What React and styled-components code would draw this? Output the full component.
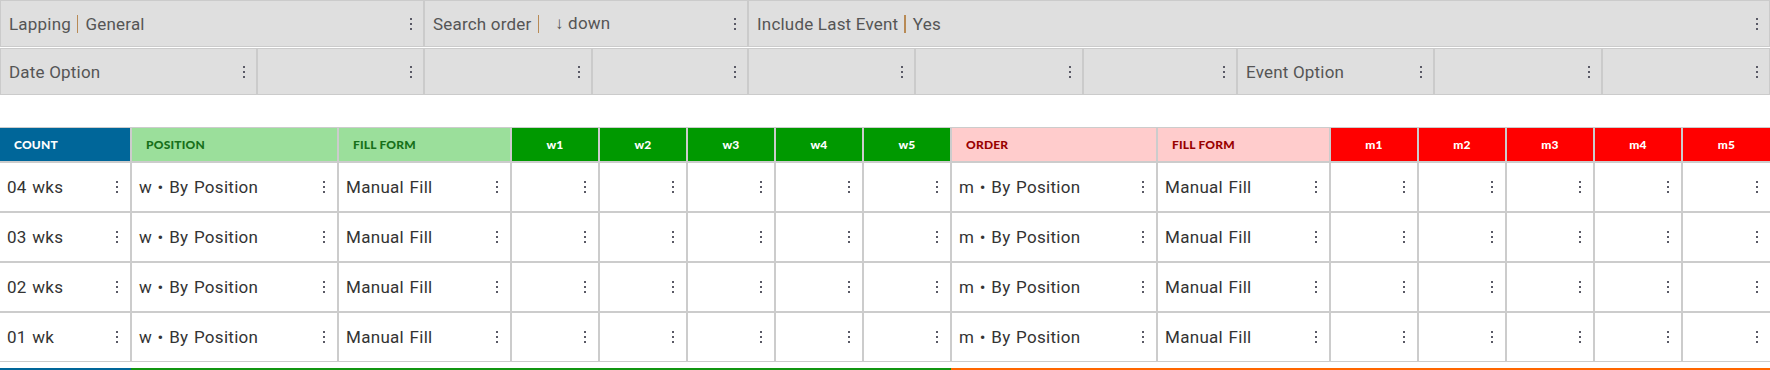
import React from "react";
import styled, { createGlobalStyle } from "styled-components";

const GlobalStyle = createGlobalStyle`
  body {
    margin: 0;
    background: #fff;
    font-family: Roboto, "Open Sans", Arial, sans-serif;
  }
`;

const topRow1 = [
  { label: "Lapping", value: "General" },
  { label: "Search order", value: "↓ down", gap: 16 },
  { label: "Include Last Event", value: "Yes" },
];

const topRow2 = [
  "Date Option",
  "",
  "",
  "",
  "",
  "",
  "",
  "Event Option",
  "",
  "",
];

const columns = [
  { title: "COUNT", kind: "count" },
  { title: "POSITION", kind: "wSoft" },
  { title: "FILL FORM", kind: "wSoft" },
  { title: "w1", kind: "wHard" },
  { title: "w2", kind: "wHard" },
  { title: "w3", kind: "wHard" },
  { title: "w4", kind: "wHard" },
  { title: "w5", kind: "wHard" },
  { title: "ORDER", kind: "mSoft" },
  { title: "FILL FORM", kind: "mSoft" },
  { title: "m1", kind: "mHard" },
  { title: "m2", kind: "mHard" },
  { title: "m3", kind: "mHard" },
  { title: "m4", kind: "mHard" },
  { title: "m5", kind: "mHard" },
];

const rows = ["04 wks", "03 wks", "02 wks", "01 wk"];

const headColors = {
  count: { bg: "#006699", fg: "#ffffff", center: false },
  wSoft: { bg: "#9bdf9b", fg: "#17701a", center: false },
  wHard: { bg: "#009900", fg: "#ffffff", center: true },
  mSoft: { bg: "#ffcccc", fg: "#990000", center: false },
  mHard: { bg: "#ff0000", fg: "#ffffff", center: true },
};

const Kebab = () => (
  <KebabIcon width="4" height="14" viewBox="0 0 4 14">
    <rect x="1" y="1" width="2" height="2" />
    <rect x="1" y="6" width="2" height="2" />
    <rect x="1" y="11" width="2" height="2" />
  </KebabIcon>
);

const App = () => {
  const cellFor = (col, row) => {
    if (col.kind === "count") return row;
    if (col.title === "POSITION") return "w • By Position";
    if (col.title === "ORDER") return "m • By Position";
    if (col.title === "FILL FORM") return "Manual Fill";
    return "";
  };

  return (
    <Page>
      <GlobalStyle />
      <Filters>
        <FilterRow cols="422px 322px 1fr">
          {topRow1.map((f) => (
            <FilterCell key={f.label}>
              <FilterText>
                {f.label}
                <Divider />
                <Value gap={f.gap}>{f.value}</Value>
              </FilterText>
              <Kebab />
            </FilterCell>
          ))}
        </FilterRow>
        <FilterRow cols="255px 165px 166px 154px 165px 166px 152px 195px 166px 1fr">
          {topRow2.map((t, i) => (
            <FilterCell key={i}>
              <FilterText>{t}</FilterText>
              <Kebab />
            </FilterCell>
          ))}
        </FilterRow>
      </Filters>

      <Grid>
        {columns.map((c, i) => (
          <HeadCell key={i} kind={c.kind}>
            {c.title}
          </HeadCell>
        ))}
        {rows.map((r) =>
          columns.map((c, i) => (
            <DataCell key={r + i}>
              <span>{cellFor(c, r)}</span>
              <Kebab />
            </DataCell>
          ))
        )}
      </Grid>

      <Strip>
        <StripPart color="#006699" />
        <StripPart color="#109510" />
        <StripPart color="#ff6600" />
      </Strip>
    </Page>
  );
};

export default App;

const Page = styled.div`
  width: 1770px;
`;

const Filters = styled.div`
  display: flex;
  flex-direction: column;
  gap: 1px;
`;

const FilterRow = styled.div`
  display: grid;
  grid-template-columns: ${(p) => p.cols};
  gap: 2px;
  padding: 1px;
  background: #cbcbcb;
  height: 47px;
  box-sizing: border-box;
`;

const FilterCell = styled.div`
  display: flex;
  align-items: center;
  justify-content: space-between;
  background: #dfdfdf;
  padding: 0 10px 0 8px;
  min-width: 0;
`;

const FilterText = styled.span`
  display: flex;
  align-items: center;
  font-size: 17px;
  letter-spacing: 0.2px;
  color: #555;
  white-space: nowrap;
`;

const Divider = styled.span`
  display: inline-block;
  width: 1.5px;
  height: 18px;
  background: #b88a55;
  margin: 0 7px 0 6px;
`;

const Value = styled.span`
  margin-left: ${(p) => (p.gap ? p.gap - 7 : 0)}px;
`;

const KebabIcon = styled.svg`
  flex: none;
  fill: #5a5a66;
`;

const Grid = styled.div`
  margin-top: 32px;
  display: grid;
  grid-template-columns:
    130px 205px 171px 86px 86px 86px 86px 86px
    204px 171px 86px 86px 86px 86px 1fr;
  grid-template-rows: 33px repeat(4, 48px);
  gap: 2px;
  padding: 1px 0;
  background: #cccccc;
`;

const HeadCell = styled.div`
  display: flex;
  align-items: center;
  justify-content: ${(p) => (headColors[p.kind].center ? "center" : "flex-start")};
  padding: ${(p) => (headColors[p.kind].center ? "0" : "0 14px")};
  background: ${(p) => headColors[p.kind].bg};
  color: ${(p) => headColors[p.kind].fg};
  font-family: Lato, "Open Sans", Arial, sans-serif;
  font-weight: 900;
  font-size: 12px;
  letter-spacing: 0.2px;
`;

const DataCell = styled.div`
  display: flex;
  align-items: center;
  justify-content: space-between;
  background: #fff;
  padding: 0 11px 0 7px;
  font-size: 17px;
  letter-spacing: 0.3px;
  word-spacing: 1px;
  color: #333;
  white-space: nowrap;
`;

const Strip = styled.div`
  margin-top: 6px;
  display: grid;
  grid-template-columns: 131px 820px 1fr;
  height: 4px;
`;

const StripPart = styled.div`
  background: ${(p) => p.color};
`;
